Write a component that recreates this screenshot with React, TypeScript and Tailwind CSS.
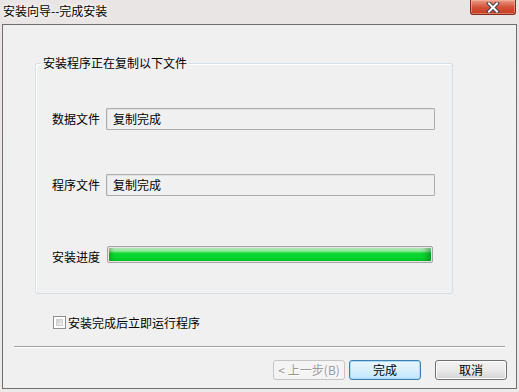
import React from "react";

const font = "font-['Noto_Sans_CJK_SC','Noto_Sans',sans-serif]";

function ReadOnlyBox({ value }: { value: string }) {
	return (
		<div className="w-[329px] h-[22px] border border-[#adadad] rounded-[1px] bg-[#f0f0f0] flex items-center pl-[6px] shadow-[inset_1px_1px_0_#e3e3e3]">
			{value}
		</div>
	);
}

export default function App() {
	return (
		<div className={`w-[519px] h-[392px] bg-gradient-to-b from-[#e9e5e4] to-[#ecebea] overflow-hidden text-[12px] leading-[14px] text-black ${font}`}>
			{/* Title bar */}
			<div className="relative h-[24px]">
				<div className="pl-[3px] pt-[4px] [text-shadow:0_0_4px_#fff,0_0_6px_#fff]">安装向导--完成安装</div>
				<div className="absolute top-0 right-[3px] w-[46px] h-[15px] rounded-b-[3px] border border-t-0 border-[#7f2a1c] bg-gradient-to-b from-[#e99b86] via-[#d4533a] to-[#c53a20] flex items-center justify-center shadow-[inset_0_0_0_1px_rgba(255,200,180,0.45)]">
					<svg width="14" height="11" viewBox="0 0 14 11">
						<path d="M3 1.5 L11 9.5 M11 1.5 L3 9.5" stroke="#3f3f4f" strokeWidth="4" strokeLinecap="square" />
						<path d="M3 1.5 L11 9.5 M11 1.5 L3 9.5" stroke="#ffffff" strokeWidth="2" strokeLinecap="square" />
					</svg>
				</div>
			</div>

			{/* Window body */}
			<div className="mx-[2px] h-[365px] border border-[#6f6f6f] bg-[#f0f0f0] flex flex-col">
				{/* Group box */}
				<div className="relative ml-[32px] mt-[38px] w-[418px] h-[231px] border border-[#d5dfe5] rounded-[3px] shadow-[inset_1px_1px_0_#fff] pl-[16px] flex flex-col">
					<div className="absolute -top-[8px] left-[5px] px-[2px] bg-[#f0f0f0]">安装程序正在复制以下文件</div>
					<div className="mt-[44px] h-[22px] flex items-center">
						<span className="w-[54px]">数据文件</span>
						<ReadOnlyBox value="复制完成" />
					</div>
					<div className="mt-[44px] h-[22px] flex items-center">
						<span className="w-[54px]">程序文件</span>
						<ReadOnlyBox value="复制完成" />
					</div>
					<div className="mt-[50px] h-[17px] flex items-center">
						<span className="w-[55px] pt-[4px]">安装进度</span>
						<div className="w-[326px] h-[17px] border border-[#a4a4a4] rounded-[2px] p-[1px] bg-[#e6e6e6]">
							<div className="h-full rounded-[1px] bg-[linear-gradient(to_bottom,#c4f5c8_0%,#95ec9f_22%,#0ed733_42%,#00d42a_80%,#05c628_100%)] shadow-[inset_4px_0_4px_-2px_rgba(0,90,20,0.4),inset_-8px_0_6px_-4px_rgba(0,90,20,0.45)]" />
						</div>
					</div>
				</div>

				{/* Checkbox */}
				<div className="ml-[50px] mt-[22px] h-[13px] flex items-center">
					<div className="w-[13px] h-[13px] border border-[#8f8f8f] bg-white p-[2px]">
						<div className="w-full h-full bg-gradient-to-br from-[#c9c9c9] to-[#f4f4f4] border border-[#d0d0d0]" />
					</div>
					<span className="ml-[2px]">安装完成后立即运行程序</span>
				</div>

				{/* Separator */}
				<div className="ml-[11px] mt-[17px] w-[491px] h-[2px] border-t border-[#a0a0a0] border-b border-b-white" />

				{/* Buttons */}
				<div className="mt-[12px] flex pl-[270px] gap-[4px]">
					<button className="w-[72px] h-[20px] border border-[#c5c5c5] rounded-[3px] bg-[#f4f4f4] text-[#9a9a9a] flex items-center justify-center gap-[3px] [text-shadow:1px_1px_0_#fff]">
						<span>&lt;</span>
						<span>上一步(B)</span>
					</button>
					<button className="w-[72px] h-[20px] border border-[#3c7fb1] rounded-[3px] bg-gradient-to-b from-[#eaf6fd] via-[#d9f0fc] to-[#bee6fd] shadow-[inset_0_0_0_1px_#a8dbf5] flex items-center justify-center">
						完成
					</button>
					<button className="ml-[10px] w-[72px] h-[20px] border border-[#707070] rounded-[3px] bg-gradient-to-b from-[#f2f2f2] via-[#ebebeb] to-[#d4d4d4] shadow-[inset_0_0_0_1px_#fcfcfc] flex items-center justify-center">
						取消
					</button>
				</div>
			</div>
		</div>
	);
}
